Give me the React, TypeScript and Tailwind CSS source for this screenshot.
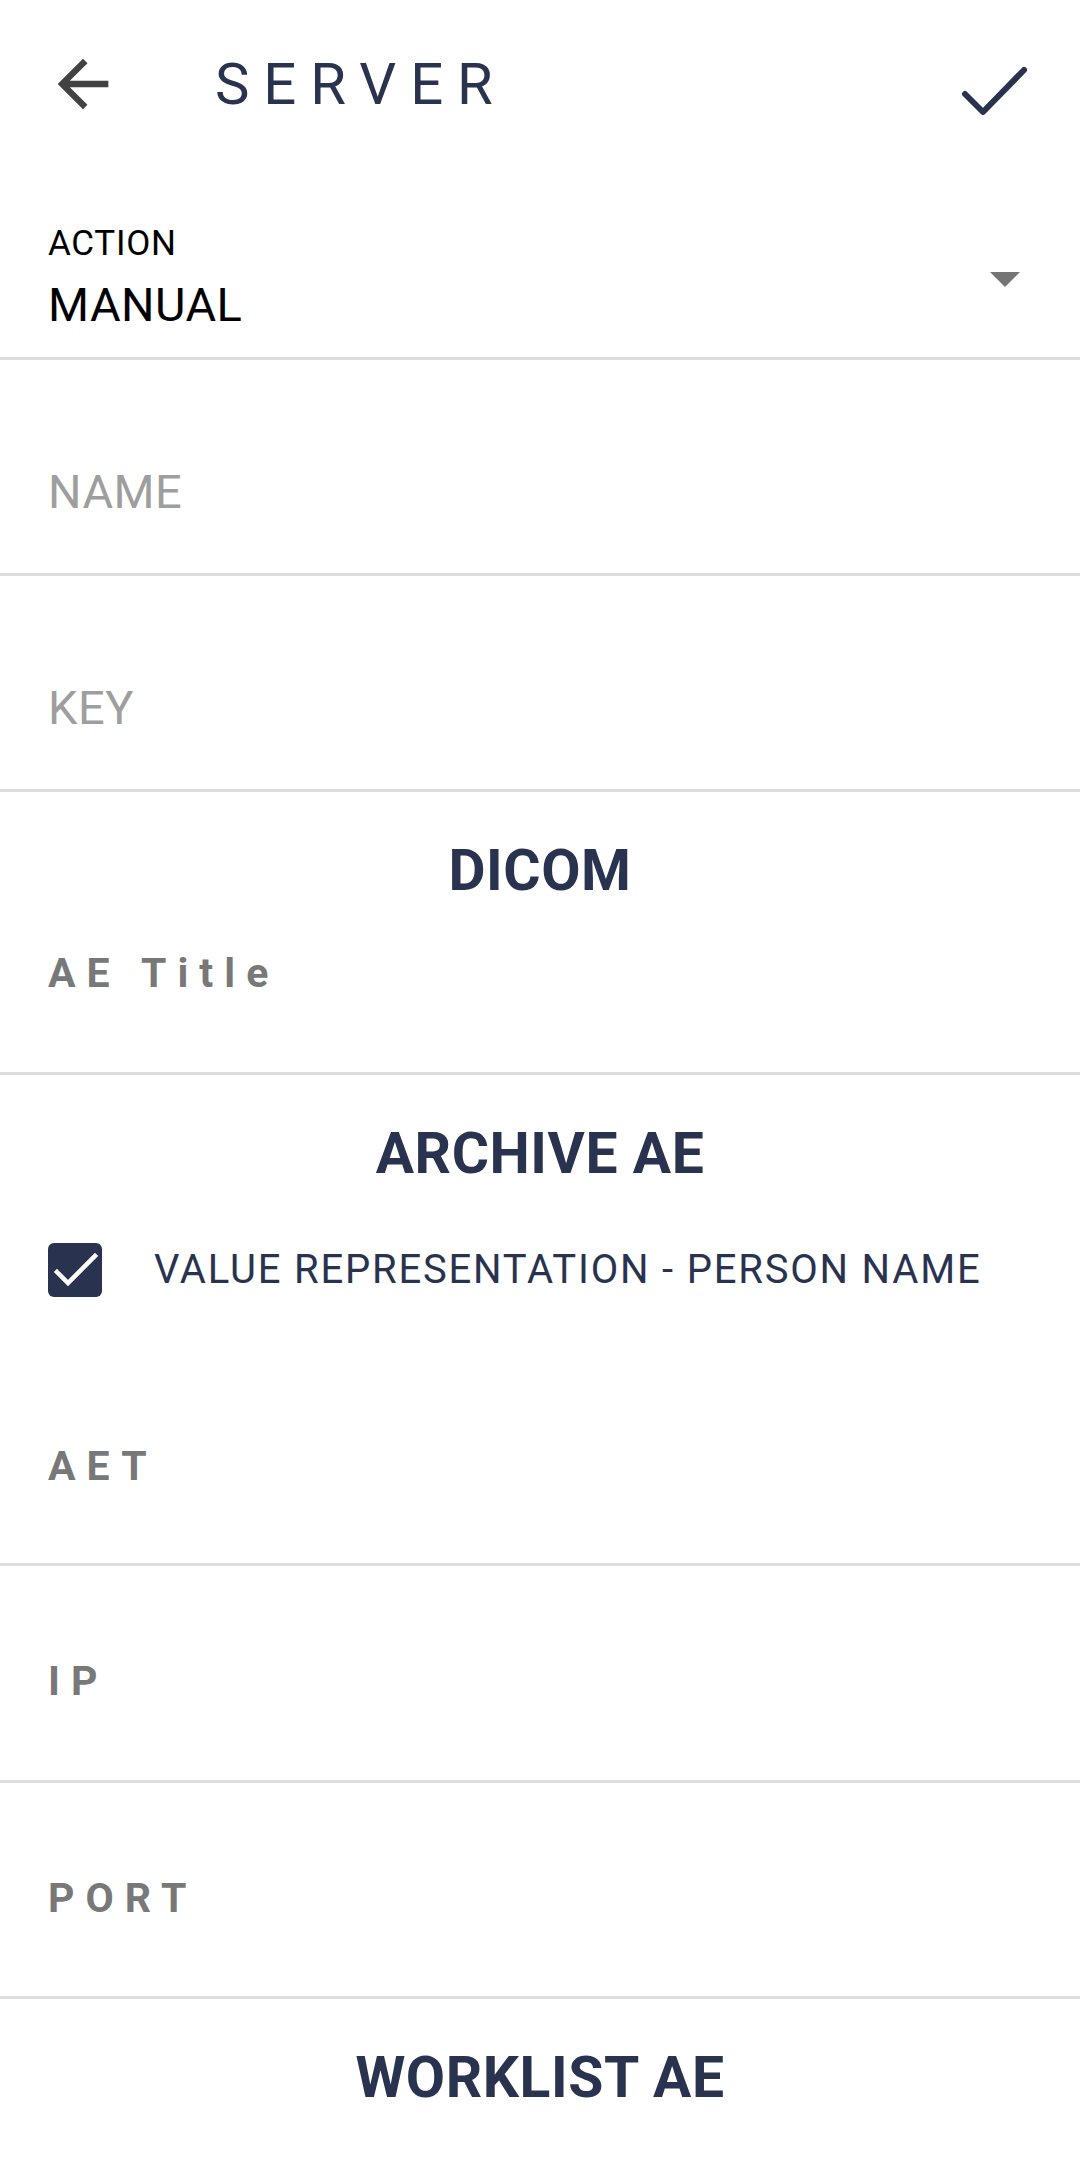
const navy = "text-[#29334f]";

function Divider() {
  return <div className="h-[3px] w-full bg-[#dedede]" />;
}

function SectionTitle({ children }: { children: string }) {
  return (
    <div className={`pt-[50px] text-center text-[57px] font-bold leading-none tracking-[0.01em] ${navy}`}>
      {children}
    </div>
  );
}

function SpacedLabel({ children, pt, pb }: { children: string; pt: string; pb: string }) {
  return (
    <div className={`px-[48px] ${pt} ${pb} text-[41px] font-bold leading-none tracking-[0.27em] text-[#787878]`}>
      {children}
    </div>
  );
}

function HintRow({ children }: { children: string }) {
  return (
    <div className="px-[48px] pt-[108px] pb-[58px] text-[47px] leading-none tracking-[0.01em] text-[#9e9e9e]">
      {children}
    </div>
  );
}

export default function App() {
  return (
    <div className="min-h-[2163px] w-[1080px] bg-white" style={{ fontFamily: "Roboto, 'Noto Sans', sans-serif" }}>
      {/* toolbar */}
      <div className="flex h-[168px] items-center">
        <svg className="ml-[45px] h-[76px] w-[76px]" viewBox="0 0 24 24" fill="#424242">
          <path d="M20 11H7.83l5.59-5.59L12 4l-8 8 8 8 1.41-1.41L7.83 13H20v-2z" />
        </svg>
        <div className={`ml-[94px] text-[58px] leading-none tracking-[0.24em] ${navy}`}>SERVER</div>
        <div className="flex-1" />
        <svg className="mr-[49px] mt-[14px] h-[56px] w-[73px]" viewBox="0 0 73 56" fill="none">
          <polyline points="7,31 25,49 66,7" stroke="#29334f" strokeWidth="6" strokeLinecap="round" strokeLinejoin="round" />
        </svg>
      </div>

      {/* action select */}
      <div className="flex justify-between px-[48px] pt-[58px] pb-[29px]">
        <div className="leading-none text-black">
          <div className="text-[35px] leading-none tracking-[0.02em]">ACTION</div>
          <div className="mt-[20px] text-[47px] leading-none tracking-[0.01em]">MANUAL</div>
        </div>
        <svg className="mr-[12px] mt-[46px] h-[15px] w-[30px]" viewBox="0 0 30 15">
          <polygon points="0,0 30,0 15,15" fill="#757575" />
        </svg>
      </div>
      <Divider />

      <HintRow>NAME</HintRow>
      <Divider />
      <HintRow>KEY</HintRow>
      <Divider />

      {/* DICOM */}
      <SectionTitle>DICOM</SectionTitle>
      <SpacedLabel pt="pt-[54px]" pb="pb-[78px]">AE Title</SpacedLabel>
      <Divider />

      {/* ARCHIVE AE */}
      <SectionTitle>ARCHIVE AE</SectionTitle>
      <div className="mt-[61px] flex items-center px-[48px]">
        <div className="flex h-[54px] w-[54px] items-center justify-center rounded-[6px] bg-[#29334f]">
          <svg className="h-[54px] w-[54px]" viewBox="0 0 54 54" fill="none">
            <polyline points="9,29 20,40 47,13" stroke="white" strokeWidth="4.5" strokeLinecap="square" />
          </svg>
        </div>
        <div className={`ml-[52px] text-[40px] leading-none tracking-[0.045em] ${navy}`}>
          VALUE REPRESENTATION - PERSON NAME
        </div>
      </div>
      <SpacedLabel pt="pt-[149px]" pb="pb-[76px]">AET</SpacedLabel>
      <Divider />
      <SpacedLabel pt="pt-[95px]" pb="pb-[78px]">IP</SpacedLabel>
      <Divider />
      <SpacedLabel pt="pt-[95px]" pb="pb-[77px]">PORT</SpacedLabel>
      <Divider />

      <SectionTitle>WORKLIST AE</SectionTitle>
    </div>
  );
}
